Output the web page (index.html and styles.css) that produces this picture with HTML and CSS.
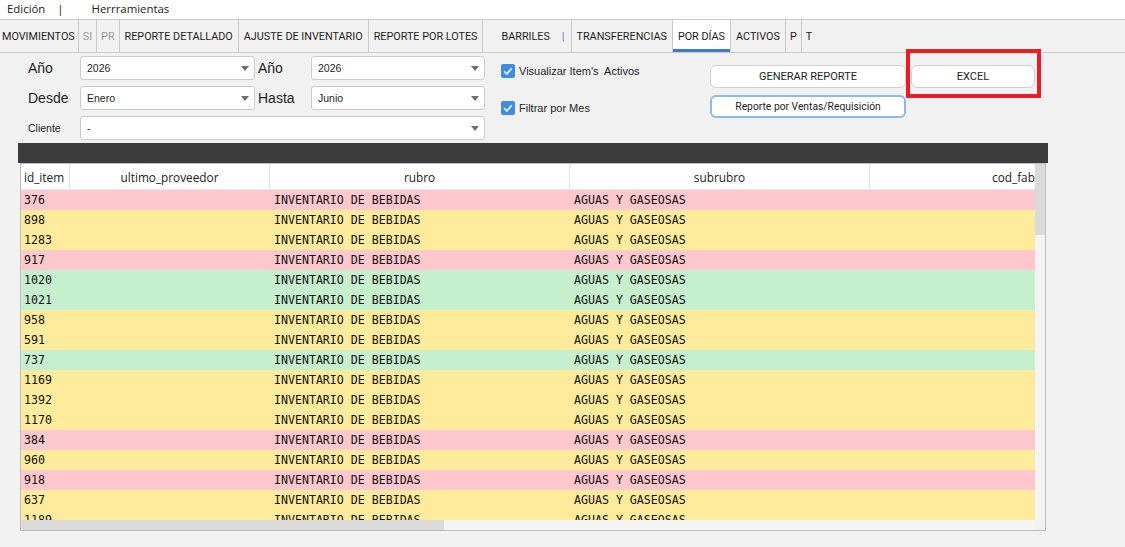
FILE: index.html
```html
<!DOCTYPE html>
<html lang="es">

<head>
    <meta charset="UTF-8">
    <meta name="viewport" content="width=device-width, initial-scale=1.0">
    <title>Reporte por días</title>
    <link rel="stylesheet" href="styles.css">
</head>

<body>
    <div class="menubar">
        <span class="menu-item">Edición</span>
        <span class="menu-sep">|</span>
        <span class="menu-item">Herrramientas</span>
    </div>

    <div class="tabs">
        <div class="tab first">MOVIMIENTOS</div>
        <div class="tab muted">SI</div>
        <div class="tab muted">PR</div>
        <div class="tab">REPORTE DETALLADO</div>
        <div class="tab">AJUSTE DE INVENTARIO</div>
        <div class="tab">REPORTE POR LOTES</div>
        <div class="tab barriles">BARRILES<span class="pipe">|</span></div>
        <div class="tab">TRANSFERENCIAS</div>
        <div class="tab active">POR DÍAS</div>
        <div class="tab">ACTIVOS</div>
        <div class="tab narrow">P</div>
        <div class="tab narrow last">T</div>
    </div>

    <div class="content">
        <div class="filters">
            <div class="fields">
                <label class="lbl">Año</label>
                <div class="select"><span>2026</span><i class="arrow"></i></div>
                <label class="lbl second">Año</label>
                <div class="select"><span>2026</span><i class="arrow"></i></div>

                <label class="lbl">Desde</label>
                <div class="select"><span>Enero</span><i class="arrow"></i></div>
                <label class="lbl second">Hasta</label>
                <div class="select"><span>Junio</span><i class="arrow"></i></div>

                <label class="lbl small">Cliente</label>
                <div class="select wide"><span>-</span><i class="arrow"></i></div>
            </div>

            <div class="checks">
                <label class="check">
                    <svg width="14" height="14" viewBox="0 0 14 14">
                        <rect x="0" y="0" width="14" height="14" rx="2" fill="#3d8de0"/>
                        <path d="M3.2 7.3 L5.8 10 L10.8 4.2" fill="none" stroke="#fff" stroke-width="1.6"/>
                    </svg>
                    Visualizar Item's&nbsp; Activos
                </label>
                <label class="check">
                    <svg width="14" height="14" viewBox="0 0 14 14">
                        <rect x="0" y="0" width="14" height="14" rx="2" fill="#3d8de0"/>
                        <path d="M3.2 7.3 L5.8 10 L10.8 4.2" fill="none" stroke="#fff" stroke-width="1.6"/>
                    </svg>
                    Filtrar por Mes
                </label>
            </div>

            <div class="actions">
                <button class="btn">GENERAR REPORTE</button>
                <button class="btn">EXCEL</button>
                <button class="btn focused">Reporte por Ventas/Requisición</button>
                <div class="highlight"></div>
            </div>
        </div>

        <div class="darkbar"></div>

        <div class="table">
            <div class="viewport">
                <div class="grid head">
                    <div class="cell left">id_item</div>
                    <div class="cell">ultimo_proveedor</div>
                    <div class="cell">rubro</div>
                    <div class="cell">subrubro</div>
                    <div class="cell">cod_fabricante</div>
                </div>
                <div class="grid row pink"><span>376</span><span></span><span>INVENTARIO DE BEBIDAS</span><span>AGUAS Y GASEOSAS</span><span></span></div>
                <div class="grid row yellow"><span>898</span><span></span><span>INVENTARIO DE BEBIDAS</span><span>AGUAS Y GASEOSAS</span><span></span></div>
                <div class="grid row yellow"><span>1283</span><span></span><span>INVENTARIO DE BEBIDAS</span><span>AGUAS Y GASEOSAS</span><span></span></div>
                <div class="grid row pink"><span>917</span><span></span><span>INVENTARIO DE BEBIDAS</span><span>AGUAS Y GASEOSAS</span><span></span></div>
                <div class="grid row green"><span>1020</span><span></span><span>INVENTARIO DE BEBIDAS</span><span>AGUAS Y GASEOSAS</span><span></span></div>
                <div class="grid row green"><span>1021</span><span></span><span>INVENTARIO DE BEBIDAS</span><span>AGUAS Y GASEOSAS</span><span></span></div>
                <div class="grid row yellow"><span>958</span><span></span><span>INVENTARIO DE BEBIDAS</span><span>AGUAS Y GASEOSAS</span><span></span></div>
                <div class="grid row yellow"><span>591</span><span></span><span>INVENTARIO DE BEBIDAS</span><span>AGUAS Y GASEOSAS</span><span></span></div>
                <div class="grid row green"><span>737</span><span></span><span>INVENTARIO DE BEBIDAS</span><span>AGUAS Y GASEOSAS</span><span></span></div>
                <div class="grid row yellow"><span>1169</span><span></span><span>INVENTARIO DE BEBIDAS</span><span>AGUAS Y GASEOSAS</span><span></span></div>
                <div class="grid row yellow"><span>1392</span><span></span><span>INVENTARIO DE BEBIDAS</span><span>AGUAS Y GASEOSAS</span><span></span></div>
                <div class="grid row yellow"><span>1170</span><span></span><span>INVENTARIO DE BEBIDAS</span><span>AGUAS Y GASEOSAS</span><span></span></div>
                <div class="grid row pink"><span>384</span><span></span><span>INVENTARIO DE BEBIDAS</span><span>AGUAS Y GASEOSAS</span><span></span></div>
                <div class="grid row yellow"><span>960</span><span></span><span>INVENTARIO DE BEBIDAS</span><span>AGUAS Y GASEOSAS</span><span></span></div>
                <div class="grid row pink"><span>918</span><span></span><span>INVENTARIO DE BEBIDAS</span><span>AGUAS Y GASEOSAS</span><span></span></div>
                <div class="grid row yellow"><span>637</span><span></span><span>INVENTARIO DE BEBIDAS</span><span>AGUAS Y GASEOSAS</span><span></span></div>
                <div class="grid row yellow"><span>1189</span><span></span><span>INVENTARIO DE BEBIDAS</span><span>AGUAS Y GASEOSAS</span><span></span></div>
            </div>
            <div class="vscroll"><div class="thumb"></div></div>
            <div class="hscroll"><div class="thumb"></div></div>
            <div class="corner"></div>
        </div>
    </div>
</body>

</html>
```

FILE: styles.css
```css
body {
    margin: 0;
    background-color: #f1f1f1;
    font-family: "Liberation Sans", Arial, sans-serif;
    color: #1e1e1e;
}

.menubar {
    height: 19px;
    line-height: 18px;
    background-color: #fff;
    font-family: "Open Sans", sans-serif;
    font-size: 11.4px;
    padding-left: 7px;
    color: #222;
}

.menu-sep {
    margin: 0 25px 0 9px;
}

.tabs {
    display: flex;
    height: 32px;
    border-top: 1px solid #cacaca;
    border-bottom: 1px solid #cacaca;
    font-family: Roboto, sans-serif;
    font-size: 10.8px;
}

.tab {
    display: flex;
    align-items: center;
    padding: 0 5px;
    border-right: 1px solid #c8c8c8;
    color: #1e1e1e;
}

.tab.first {
    padding-left: 2px;
    padding-right: 3px;
}

.tab.muted {
    padding: 0 4px;
    color: #9a9a9a;
}

.tab.barriles {
    padding-left: 18px;
    padding-right: 6px;
}

.tab.barriles .pipe {
    margin-left: 12px;
    color: #3a7fc8;
}

.tab.active {
    background-color: #fff;
    box-shadow: inset 0 -3px 0 #3a7fc8;
}

.tab.narrow {
    padding: 0 4px;
}

.tab.last {
    border-right: none;
}

.content {
    padding: 3px 0 0 18px;
}

.filters {
    display: flex;
    height: 84px;
}

.fields {
    margin-left: 10px;
    display: grid;
    grid-template-columns: 52px 175px 56px 174px;
    grid-auto-rows: 24px;
    row-gap: 6px;
}

.lbl {
    display: flex;
    align-items: center;
    font-size: 14px;
}

.lbl.second {
    padding-left: 3px;
}

.lbl.small {
    font-size: 10.5px;
}

.select {
    display: flex;
    align-items: center;
    justify-content: space-between;
    background-color: #fff;
    border: 1px solid #cbcbcb;
    border-radius: 3px;
    padding: 0 5px 0 6px;
    font-size: 10.5px;
}

.select.wide {
    grid-column: 2 / 5;
}

.arrow {
    width: 0;
    height: 0;
    border-left: 4px solid transparent;
    border-right: 4px solid transparent;
    border-top: 5px solid #6e6e6e;
}

.checks {
    margin-left: 16px;
    width: 209px;
    display: flex;
    flex-direction: column;
    gap: 23px;
    padding-top: 8px;
}

.check {
    display: flex;
    align-items: center;
    gap: 4px;
    font-size: 11px;
}

.actions {
    position: relative;
    display: grid;
    grid-template-columns: 196px 124px;
    grid-auto-rows: 23px;
    gap: 7px 5px;
    margin-top: 9px;
    align-self: flex-start;
}

.btn {
    background-color: #fff;
    border: 1px solid #cfcfcf;
    border-radius: 6px;
    font-family: Roboto, sans-serif;
    font-size: 11px;
    color: #1e1e1e;
    padding: 0;
}

.btn.focused {
    border: 2px solid #8cb9ea;
    font-size: 10.3px;
}

.highlight {
    position: absolute;
    left: 196px;
    top: -16px;
    width: 127px;
    height: 41px;
    border: 4px solid #ed1c24;
}

.darkbar {
    margin-top: 3px;
    width: 1030px;
    height: 20px;
    background-color: #3c3c3c;
}

.table {
    margin-left: 2px;
    width: 1024px;
    height: 366px;
    border: 1px solid #bdbdbd;
    display: grid;
    grid-template-columns: 1014px 10px;
    grid-template-rows: 356px 10px;
    background-color: #fff;
}

.viewport {
    overflow: hidden;
}

.grid {
    display: grid;
    grid-template-columns: 49px 200px 300px 300px 326px;
    width: 1175px;
}

.head {
    height: 26px;
    background-color: #fff;
    font-family: "Open Sans", sans-serif;
    font-size: 11.8px;
    color: #222;
}

.head .cell {
    display: flex;
    align-items: center;
    justify-content: center;
    border-right: 1px solid #e4e4e4;
    border-bottom: 1px solid #e8e8e8;
    white-space: nowrap;
}

.head .cell.left {
    justify-content: flex-start;
    padding-left: 3px;
}

.row {
    height: 20px;
    line-height: 20px;
    font-family: "DejaVu Sans Mono", monospace;
    font-size: 11.6px;
    color: #111;
}

.row span {
    padding-left: 4px;
    white-space: nowrap;
}

.row span:first-child {
    padding-left: 3px;
}

.pink {
    background-color: #ffc7ce;
}

.yellow {
    background-color: #ffeb9c;
}

.green {
    background-color: #c6efce;
}

.vscroll {
    background-color: #f4f4f4;
}

.vscroll .thumb {
    height: 71px;
    background-color: #dadada;
}

.hscroll {
    background-color: #f4f4f4;
}

.hscroll .thumb {
    width: 423px;
    height: 10px;
    background-color: #dadada;
}

.corner {
    background-color: #f1f1f1;
}
```
